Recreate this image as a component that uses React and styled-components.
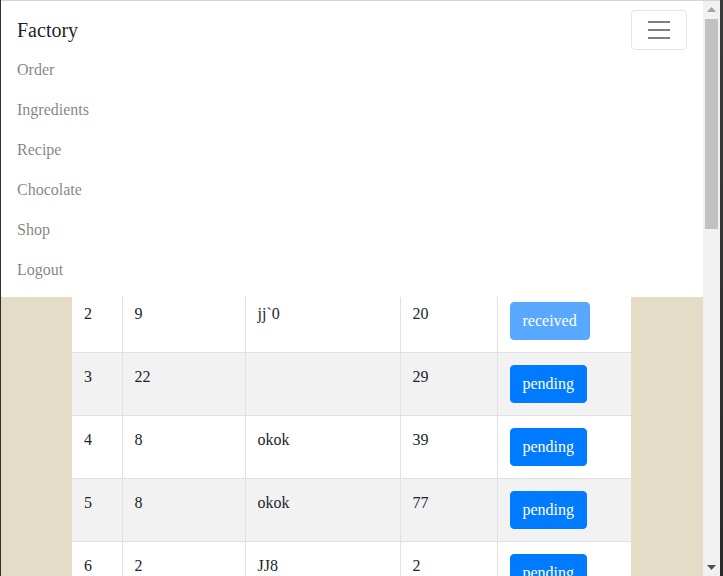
import React from 'react';
import styled, { createGlobalStyle } from 'styled-components';

const GlobalStyle = createGlobalStyle`
html, body {
  margin:0;
  padding:0;
  overflow:hidden;
  background:#2b2b2b;
}
* {
  font-family:"Liberation Serif", "Times New Roman", "DejaVu Serif", serif;
}
`;

const Frame = styled.div`
width:723px;
height:576px;
display:flex;
background:#2b2b2b;
`;
const LeftEdge = styled.div`
width:1px;
flex-shrink:0;
background:#303030;
`;
const Window = styled.div`
display:flex;
flex-direction:column;
width:719px;
border-top:1px solid #d4d4d4;
`;
const WindowBody = styled.div`
display:flex;
flex:1;
min-height:0;
`;
const Page = styled.div`
width:702px;
overflow:hidden;
background:#e4dcc6;
display:flex;
flex-direction:column;
`;
const Navbar = styled.nav`
background:#fff;
padding:9px 16px 7px;
display:flex;
flex-direction:column;
`;
const NavTop = styled.div`
display:flex;
justify-content:space-between;
align-items:flex-start;
`;
const Brand = styled.a`
font-size:20px;
line-height:30px;
padding:5px 0;
color:rgba(0,0,0,0.9);
`;
const Toggler = styled.button`
width:56px;
height:40px;
background:transparent;
border:1px solid rgba(0,0,0,0.1);
border-radius:4px;
display:flex;
align-items:center;
justify-content:center;
padding:0;
`;
const NavList = styled.ul`
list-style:none;
margin:0;
padding:0;
`;
const NavLink = styled.li`
font-size:16px;
line-height:24px;
padding:8px 0;
color:rgba(0,0,0,0.5);
`;
const TableWrap = styled.div`
padding:0 72px 0 71px;
`;
const Table = styled.table`
width:559px;
table-layout:fixed;
border-collapse:collapse;
background:#fff;
color:#212529;
font-size:16px;
`;
const Row = styled.tr`
background:${p => (p.$striped ? '#f2f2f2' : '#fff')};
`;
const Cell = styled.td`
padding:${p => (p.$clipped ? '5px 12px 12px' : '12px')};
font-size:16px;
line-height:24px;
vertical-align:top;
border-top:${p => (p.$clipped ? 'none' : '1px solid #dee2e6')};
border-left:1px solid #dee2e6;
&:first-child { border-left:none; }
`;
const StatusButton = styled.button`
font-size:16px;
line-height:24px;
padding:6px 12px;
border:1px solid #007bff;
border-radius:4px;
background:#007bff;
color:#fff;
opacity:${p => (p.$done ? 0.65 : 1)};
`;
const Scrollbar = styled.div`
width:17px;
flex-shrink:0;
background:#f1f1f1;
display:flex;
flex-direction:column;
align-items:center;
`;
const Arrow = styled.div`
height:17px;
display:flex;
align-items:center;
justify-content:center;
`;
const Thumb = styled.div`
width:13px;
height:210px;
margin-top:1px;
background:#c1c1c1;
`;
const Spacer = styled.div`
flex:1;
`;
const RightEdge = styled.div`
width:3px;
flex-shrink:0;
background:linear-gradient(#3b3b3b, #2a2a2a);
`;

const links = ['Order', 'Ingredients', 'Recipe', 'Chocolate', 'Shop', 'Logout'];

const orders = [
  { id: 2, qty: 9, note: 'jj`0', total: 20, status: 'received' },
  { id: 3, qty: 22, note: '', total: 29, status: 'pending' },
  { id: 4, qty: 8, note: 'okok', total: 39, status: 'pending' },
  { id: 5, qty: 8, note: 'okok', total: 77, status: 'pending' },
  { id: 6, qty: 2, note: 'JJ8', total: 2, status: 'pending' },
];

const TogglerIcon = () => (
  <svg width="30" height="30" viewBox="0 0 30 30">
    <path d="M4 7h22M4 15h22M4 23h22" stroke="rgba(0,0,0,0.5)" strokeWidth="2" />
  </svg>
);

const App = () => {
  return (
    <Frame>
      <GlobalStyle />
      <LeftEdge />
      <Window>
        <WindowBody>
          <Page>
            <Navbar>
              <NavTop>
                <Brand>Factory</Brand>
                <Toggler aria-label="Toggle navigation"><TogglerIcon /></Toggler>
              </NavTop>
              <NavList>
                {links.map(l => <NavLink key={l}>{l}</NavLink>)}
              </NavList>
            </Navbar>
            <TableWrap>
              <Table>
                <colgroup>
                  <col style={{ width: 50 }} />
                  <col style={{ width: 123 }} />
                  <col style={{ width: 155 }} />
                  <col style={{ width: 97 }} />
                  <col style={{ width: 134 }} />
                </colgroup>
                <tbody>
                  {orders.map((o, i) => (
                    <Row key={o.id} $striped={i % 2 === 1}>
                      <Cell $clipped={i === 0}>{o.id}</Cell>
                      <Cell $clipped={i === 0}>{o.qty}</Cell>
                      <Cell $clipped={i === 0}>{o.note}</Cell>
                      <Cell $clipped={i === 0}>{o.total}</Cell>
                      <Cell $clipped={i === 0}>
                        <StatusButton $done={o.status === 'received'}>{o.status}</StatusButton>
                      </Cell>
                    </Row>
                  ))}
                </tbody>
              </Table>
            </TableWrap>
          </Page>
          <Scrollbar>
            <Arrow>
              <svg width="9" height="5" viewBox="0 0 9 5"><path d="M0 5L4.5 0L9 5z" fill="#a3a3a3" /></svg>
            </Arrow>
            <Thumb />
            <Spacer />
            <Arrow>
              <svg width="9" height="5" viewBox="0 0 9 5"><path d="M0 0L4.5 5L9 0z" fill="#505050" /></svg>
            </Arrow>
          </Scrollbar>
        </WindowBody>
      </Window>
      <RightEdge />
    </Frame>
  );
};

export default App;
